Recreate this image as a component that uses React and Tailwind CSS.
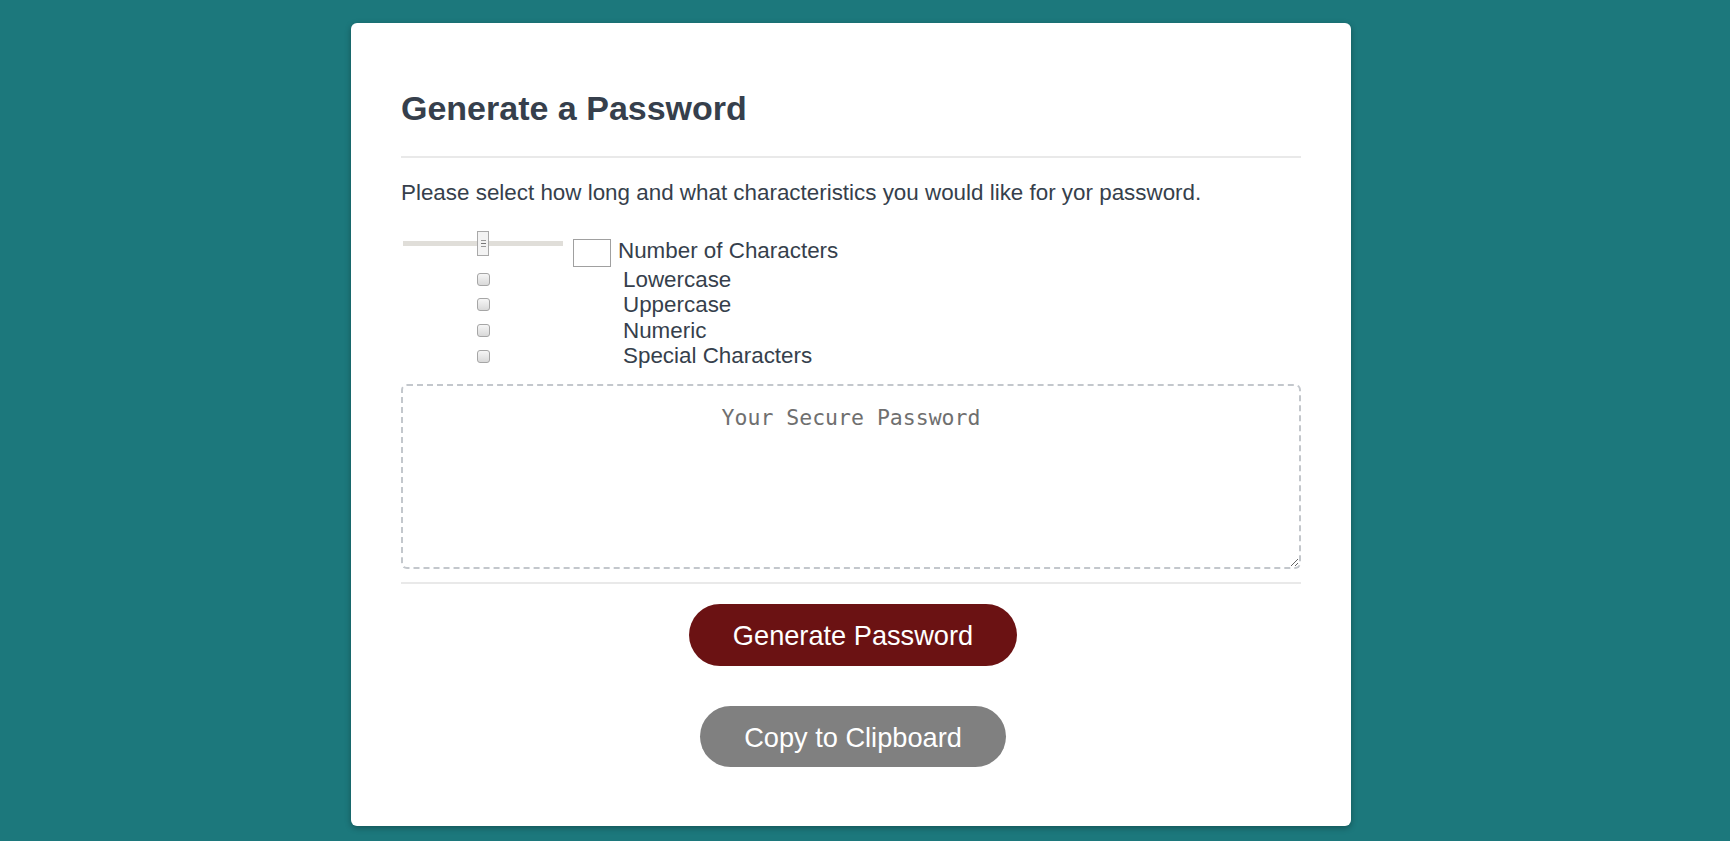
import { useState } from "react";

const options = ["Lowercase", "Uppercase", "Numeric", "Special Characters"];

const SliderMock = () => (
  <div className="flex w-[160px] h-[25px] items-center">
    <div className="h-[5px] flex-1 bg-[#e0ded9]" />
    <div className="w-[12px] h-[25px] bg-[#f3f3f3] border border-[#a9a9a9] flex flex-col items-center justify-center gap-[2px]">
      <div className="w-[5px] h-px bg-[#9a9a9a]" />
      <div className="w-[5px] h-px bg-[#777]" />
      <div className="w-[5px] h-px bg-[#9a9a9a]" />
    </div>
    <div className="h-[5px] flex-1 bg-[#e0ded9]" />
  </div>
);

const BoxMock = () => (
  <div className="w-[13px] h-[13px] rounded-[3px] border border-[#a6a6a6] bg-gradient-to-b from-[#f6f6f6] to-[#d9d9d9]" />
);

export default function App() {
  const [password, setPassword] = useState("");

  return (
    <div className="min-h-screen bg-[#1c787c] pt-[23px] pb-[15px] font-['Liberation_Sans',Arial,sans-serif]">
      <div className="ml-[351px] w-[1000px] bg-white rounded-[6px] shadow-[0_2px_6px_rgba(0,0,0,0.3)] px-[50px] pt-[65px] pb-[59px] text-[#363f4c]">
        <h2 className="text-[34px] font-bold leading-[1.2]">Generate a Password</h2>
        <div className="mt-[27px] h-[2px] bg-[#e9e9e9]" />

        <p className="mt-[22px] text-[22.4px] leading-[25.7px]">
          Please select how long and what characteristics you would like for yor password.
        </p>

        <div className="mt-[25px] pl-[2px] text-[22.4px]">
          <div className="flex items-start">
            <SliderMock />
            <input
              type="text"
              className="ml-[10px] mt-[8px] w-[38px] h-[28px] border border-[#a0a0a0] outline-none"
            />
            <span className="ml-[7px] mt-[7px] leading-[25.7px]">Number of Characters</span>
          </div>
          {options.map((opt) => (
            <div key={opt} className="flex items-center h-[25.6px]">
              <div className="w-[160px] flex justify-center">
                <BoxMock />
              </div>
              <span className="ml-[60px] leading-[25.6px]">{opt}</span>
            </div>
          ))}
        </div>

        <textarea
          value={password}
          onChange={(e) => setPassword(e.target.value)}
          placeholder="Your Secure Password"
          className="mt-[15px] block w-full h-[185px] rounded-[6px] border-2 border-dashed border-[#c3c7cc] pt-[19px] px-4 text-center text-[21.5px] leading-[25px] font-['DejaVu_Sans_Mono',monospace] placeholder:text-[#6f6f6f] outline-none"
        />
        <div className="mt-[13px] h-[2px] bg-[#e9e9e9]" />

        <div className="mt-[20px] flex flex-col items-center gap-[40px] pl-[4px]">
          <button className="h-[62px] px-[44px] pt-[4px] rounded-full bg-[#6b1213] text-white text-[27.2px]">
            Generate Password
          </button>
          <button className="h-[61px] px-[44px] pt-[4px] rounded-full bg-[#808080] text-white text-[27.2px]">
            Copy to Clipboard
          </button>
        </div>
      </div>
    </div>
  );
}
